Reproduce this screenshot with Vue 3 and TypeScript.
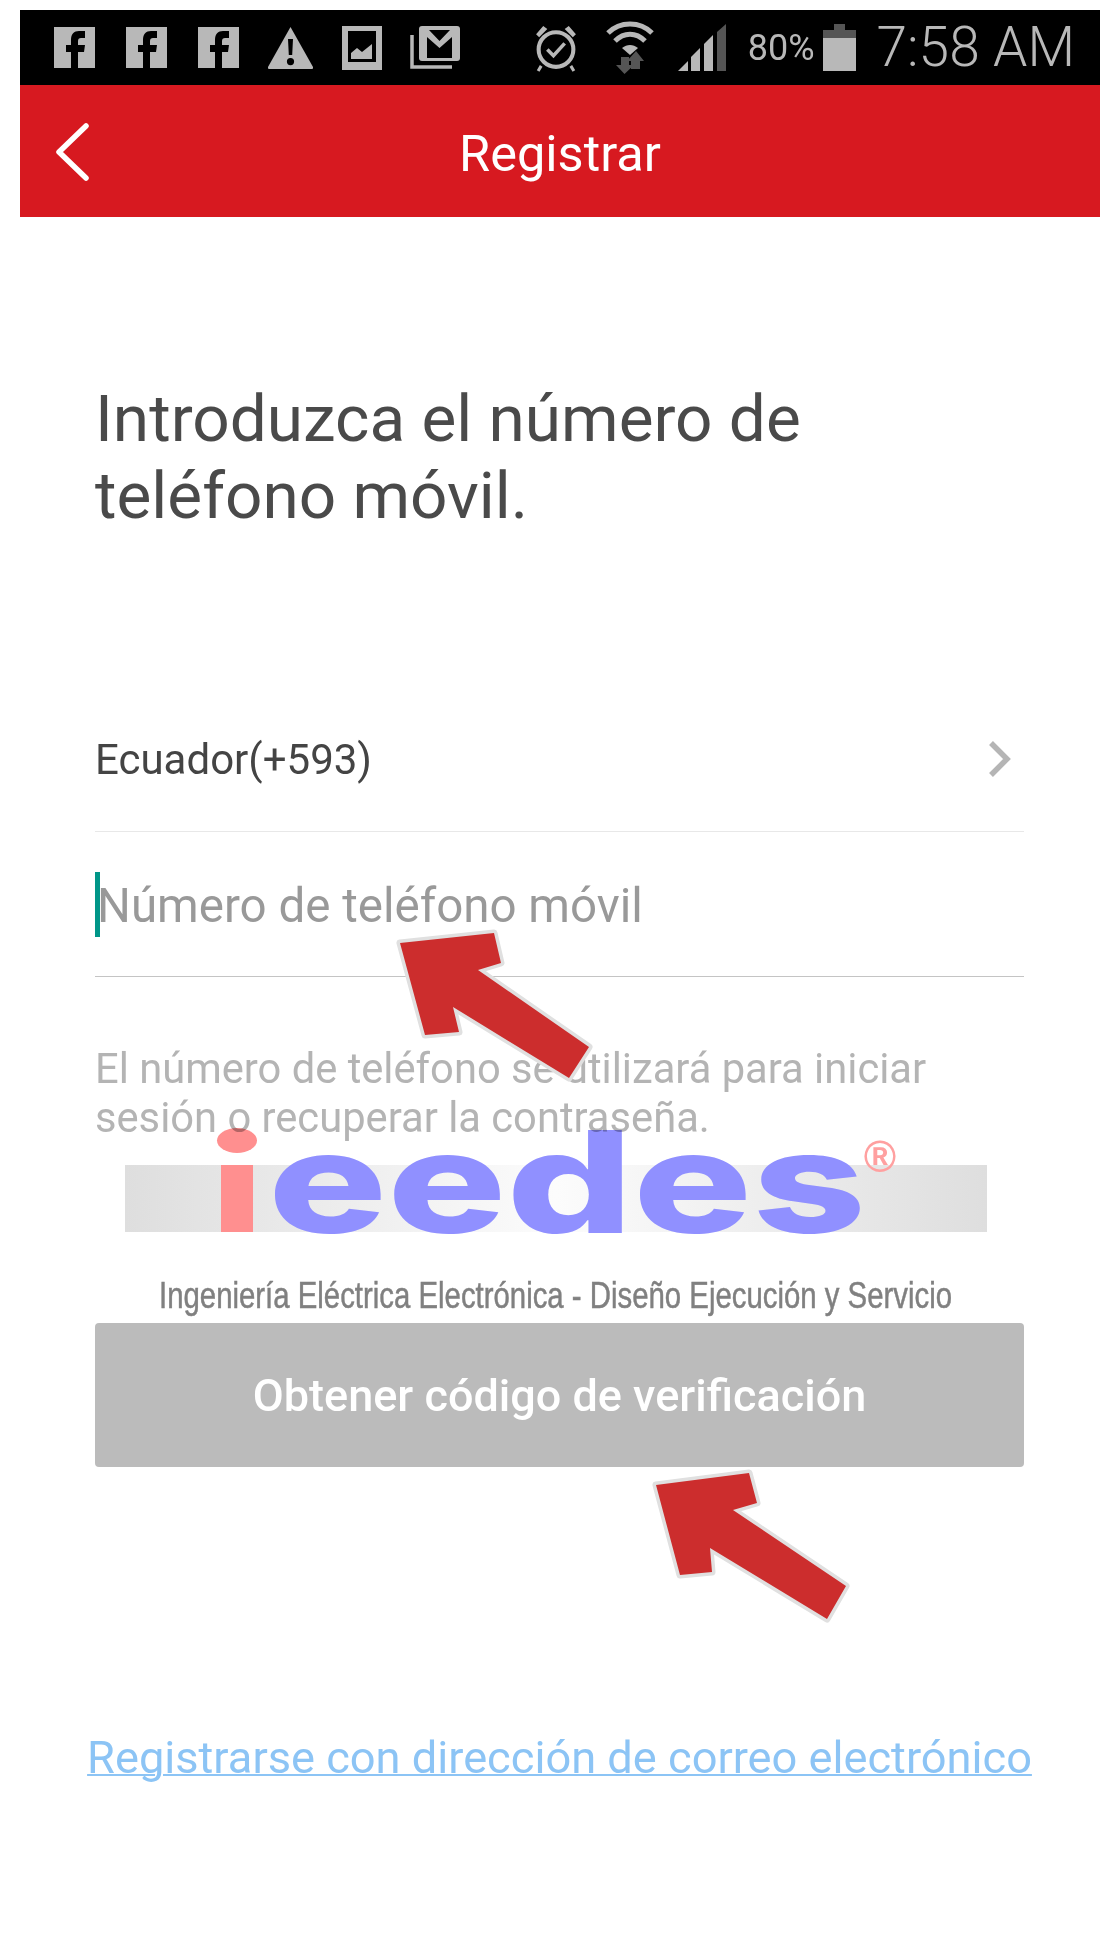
<template>
  <div class="page">
    <div class="screen">
      <!-- Status bar -->
      <div class="status">
        <svg v-for="n in 3" :key="n" class="status__fb" width="41" height="41" viewBox="0 0 41 41">
          <rect width="41" height="41" fill="#b8b8b8" />
          <path d="M17 41V25h-5v-7h5v-5c0-6 3-9 8-9h6v7h-4c-2 0-3 1-3 3v4h7l-1 7h-6v16z" fill="#000" />
        </svg>
        <svg class="status__warn" width="47" height="43" viewBox="0 0 47 43">
          <path d="M23.5 1 46 41q.5 2-1 2H2q-1.500 0-1-2z" fill="#b8b8b8" />
          <path d="M21 13h5l-.8 16h-3.400zM23.500 32a3.600 3.600 0 1 1 0 7.200 3.600 3.600 0 0 1 0-7.200z" fill="#000" />
        </svg>
        <svg class="status__photo" width="40" height="44" viewBox="0 0 40 44">
          <rect width="40" height="44" fill="#b8b8b8" />
          <rect x="6" y="5" width="28" height="31" fill="#000" />
          <path d="M9 33v-6l6-5 5 4 10-8v15z" fill="#b8b8b8" />
        </svg>
        <svg class="status__mail" width="50" height="43" viewBox="0 0 50 43">
          <path d="M2 9v32h40" fill="none" stroke="#b8b8b8" stroke-width="3.500" />
          <rect x="9" y="0" width="41" height="35" rx="3" fill="#b8b8b8" />
          <rect x="13" y="4" width="33" height="28" fill="#000" />
          <path d="M13 4h6l10.500 11L40 4h6v28h-4V11L29.500 22 17 11v21h-4z" fill="#b8b8b8" />
        </svg>

        <div class="status__right">
          <svg class="status__alarm" width="46" height="48" viewBox="0 0 43 47">
            <circle cx="21.500" cy="25" r="17" fill="none" stroke="#b8b8b8" stroke-width="4" />
            <path d="M2 10 9 2l4 3-8 8zM41 10l-7-8-4 3 8 8z" fill="#b8b8b8" />
            <path d="M7 41l-3 5M36 41l3 5" stroke="#b8b8b8" stroke-width="3" />
            <path d="M13 25l6 6 11-12" fill="none" stroke="#b8b8b8" stroke-width="3.500" />
          </svg>
          <svg class="status__wifi" width="48" height="53" viewBox="0 0 48 53">
            <path d="M2 12C14 0 34 0 46 12" fill="none" stroke="#b8b8b8" stroke-width="5" />
            <path d="M9 20C18 11 30 11 39 20" fill="none" stroke="#b8b8b8" stroke-width="5" />
            <path d="M16 27c5-4 11-4 16 0l-8 7z" fill="#b8b8b8" />
            <path d="M15 36h8v8h5L18.500 53 10 44h5z" fill="#555" />
            <path d="M31 48h-6v-8h-4l9-10 8 10h-4v8z" fill="#555" />
          </svg>
          <svg class="status__signal" width="48" height="47" viewBox="0 0 48 47">
            <path d="M0 47l10-10v10z" fill="#b8b8b8" />
            <path d="M13 47V33l9-9v23z" fill="#b8b8b8" />
            <path d="M26 47V20l9-9v36z" fill="#b8b8b8" />
            <path d="M39 47V8l9-8v47z" fill="#555" />
          </svg>
          <span class="status__percent">80%</span>
          <svg class="status__battery" width="33" height="47" viewBox="0 0 33 47">
            <rect x="11" y="0" width="11" height="6" fill="#555" />
            <rect x="0" y="6" width="33" height="8" fill="#555" />
            <rect x="0" y="14" width="33" height="33" fill="#b8b8b8" />
          </svg>
          <span class="status__time">7:58 AM</span>
        </div>
      </div>

      <!-- Encabezado -->
      <header class="appbar">
        <svg class="appbar__back" width="36" height="60" viewBox="0 0 36 60">
          <path d="M31 4 4 30l27 26" fill="none" stroke="#fff" stroke-width="5.500" stroke-linecap="round" stroke-linejoin="round" />
        </svg>
        <h1 class="appbar__title">Registrar</h1>
      </header>

      <!-- Formulario -->
      <main class="form">
        <h2 class="form__heading">Introduzca el número de<br />teléfono móvil.</h2>

        <div class="form__row form__row--country">
          <span>Ecuador(+593)</span>
          <svg width="26" height="38" viewBox="0 0 26 38">
            <path d="M4 3l16 16L4 35" fill="none" stroke="#b5b5b5" stroke-width="5.500" />
          </svg>
        </div>

        <div class="form__row form__row--phone">
          <span class="form__caret"></span>
          <span class="form__placeholder">Número de teléfono móvil</span>
        </div>

        <p class="form__help">El número de teléfono se utilizará para iniciar<br />sesión o recuperar la contraseña.</p>

        <button class="form__button" type="button">Obtener código de verificación</button>

        <a class="form__link" href="#">Registrarse con dirección de correo electrónico</a>
      </main>
    </div>

    <!-- Marca de agua -->
    <svg class="watermark" width="1120" height="1940" viewBox="0 0 1120 1940">
      <defs>
        <linearGradient id="band" x1="0" x2="1" y1="0" y2="0">
          <stop offset="0" stop-color="#dedede" />
          <stop offset="0.5" stop-color="#fcfcfc" />
          <stop offset="1" stop-color="#dedede" />
        </linearGradient>
      </defs>
      <rect x="125" y="1165" width="862" height="67" fill="url(#band)" />
      <rect x="221" y="1165" width="32" height="67" fill="#ff8f8f" />
      <ellipse cx="237" cy="1140.500" rx="20" ry="12.500" fill="#ff8f8f" />
      <text class="watermark__name" x="268" y="1233" textLength="598" lengthAdjust="spacingAndGlyphs">eedes</text>
      <text class="watermark__reg" x="880" y="1172" text-anchor="middle">®</text>
      <text class="watermark__sub" x="159" y="1308" textLength="793" lengthAdjust="spacingAndGlyphs">Ingeniería Eléctrica Electrónica - Diseño Ejecución y Servicio</text>
    </svg>

    <!-- Flechas -->
    <svg class="arrows" width="1120" height="1940" viewBox="0 0 1120 1940">
      <polygon class="arrows__item" points="400,943 494,933 501,963 478,970 589,1047 569,1078 453,1007 459,1032 425,1035" />
      <polygon class="arrows__item" points="656,1485 749,1473 757,1503 733,1510 846,1586 827,1619 710,1548 712,1572 680,1575" />
    </svg>
  </div>
</template>

<script setup lang="ts">
</script>

<style>
body {
  background: #fff;
}
</style>

<style scoped>
.page {
  position: relative;
  width: 1120px;
  height: 1940px;
  overflow: hidden;
  background: #fff;
  font-family: Roboto, 'Liberation Sans', sans-serif;
}

.screen {
  margin: 0 20px;
  padding-top: 10px;
}

/* Barra de estado */
.status {
  height: 75px;
  padding: 0 25px 0 34px;
  display: flex;
  align-items: center;
  background: #000;
}

.status svg {
  flex-shrink: 0;
}

.status__fb {
  margin-right: 31px;
}

.status__fb:nth-of-type(3) {
  margin-right: 28px;
}

.status__warn,
.status__photo {
  margin-right: 28px;
}

.status__right {
  margin-left: auto;
  display: flex;
  align-items: center;
}

.status__alarm {
  margin-right: 27px;
}

.status__wifi {
  margin-right: 24px;
}

.status__signal {
  margin-right: 22px;
}

.status__percent {
  margin-right: 8px;
  color: #b8b8b8;
  font-size: 36px;
  font-weight: 400;
}

.status__battery {
  margin-right: 21px;
}

.status__time {
  color: #b8b8b8;
  font-size: 55px;
  font-weight: 300;
  line-height: 75px;
  white-space: nowrap;
}

/* Encabezado */
.appbar {
  position: relative;
  height: 132px;
  padding-top: 4px;
  box-sizing: border-box;
  display: flex;
  align-items: center;
  justify-content: center;
  background: #d71920;
}

.appbar__back {
  position: absolute;
  left: 35px;
  top: 37px;
}

.appbar__title {
  margin: 0;
  color: #fff;
  font-size: 50.500px;
  font-weight: 400;
}

/* Formulario */
.form {
  padding: 163px 76px 0 75px;
  display: flex;
  flex-direction: column;
}

.form__heading {
  margin: 0 0 153px;
  color: #4a4a4a;
  font-size: 65.700px;
  font-weight: 400;
  line-height: 77px;
}

.form__row {
  height: 145px;
  box-sizing: border-box;
  display: flex;
  align-items: center;
}

.form__row--country {
  justify-content: space-between;
  padding-right: 11px;
  color: #444;
  font-size: 42px;
  border-bottom: 1px solid #e8e8e8;
}

.form__row--phone {
  border-bottom: 1px solid #c4c4c4;
}

.form__caret {
  width: 5px;
  height: 65px;
  background: #009688;
  flex-shrink: 0;
}

.form__placeholder {
  margin-left: -3px;
  padding-top: 3px;
  color: #999;
  font-size: 47.500px;
}

.form__help {
  margin: 67px 0 0;
  color: #b4b4b4;
  font-size: 41.700px;
  line-height: 49px;
}

.form__button {
  margin-top: 181px;
  height: 144px;
  padding: 0;
  border: none;
  border-radius: 4px;
  background: #bbb;
  color: #fff;
  font-family: inherit;
  font-size: 45px;
  font-weight: 500;
}

.form__link {
  margin-top: 263px;
  align-self: center;
  color: #8cc4f5;
  font-size: 45.200px;
  line-height: 56px;
  white-space: nowrap;
  text-decoration: underline;
  text-decoration-thickness: 2px;
}

/* Superposiciones */
.watermark {
  position: absolute;
  left: 0;
  top: 0;
  mix-blend-mode: multiply;
  pointer-events: none;
}

.watermark__name {
  fill: #9090ff;
  font-family: Inter, 'DejaVu Sans', sans-serif;
  font-size: 142px;
  font-weight: 800;
}

.watermark__reg {
  fill: #ffa0a0;
  font-family: 'Liberation Sans', sans-serif;
  font-size: 44px;
  font-weight: 700;
}

.watermark__sub {
  fill: #808080;
  stroke: #808080;
  stroke-width: 0.5;
  font-family: 'Liberation Sans', sans-serif;
  font-size: 37px;
  filter: blur(0.7px);
}

.arrows {
  position: absolute;
  left: 0;
  top: 0;
  pointer-events: none;
}

.arrows__item {
  fill: #cc2d2d;
  stroke: #e0e0e0;
  stroke-width: 7;
  stroke-linejoin: round;
  paint-order: stroke;
}
</style>
